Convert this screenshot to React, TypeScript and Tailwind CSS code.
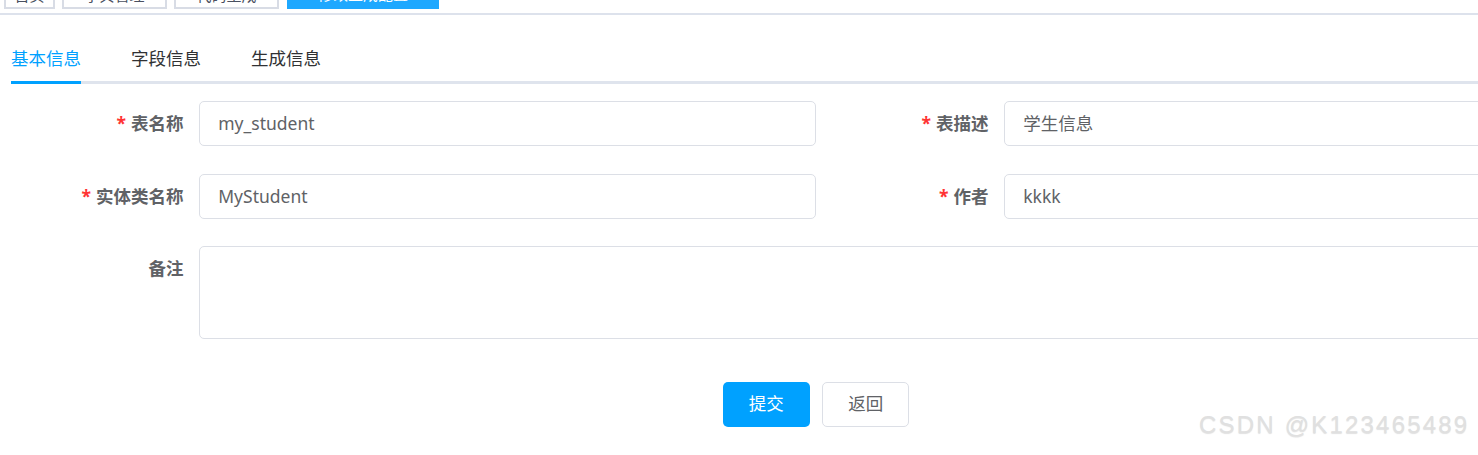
import React from 'react';

const tags = [
  { name: '首页', w: 'w-[51px]' },
  { name: '字典管理', w: 'w-[105px]' },
  { name: '代码生成', w: 'w-[105px]' },
];

const FormItem = ({ label, value, required = true }: { label: string; value: string; required?: boolean }) => (
  <div className="flex mb-[27.5px]">
    <label className="w-[187.5px] shrink-0 pr-[15px] text-right h-[45px] leading-[45px] font-bold text-[#606266]">
      {required && <span className="text-[#f33] mr-[5px]">*</span>}
      {label}
    </label>
    <div className="flex-1 h-[45px] border border-[#dcdfe6] rounded-[5px] px-[18.75px] leading-[43px] text-[#606266] bg-white">
      {value}
    </div>
  </div>
);

export default function App() {
  return (
    <div
      className="relative w-[1478px] h-[455px] overflow-hidden bg-white text-[17.5px]"
      style={{ fontFamily: '"Noto Sans", "Noto Sans CJK SC", sans-serif' }}
    >
      {/* 标签栏（被截掉上半部分） */}
      <div className="h-[15px] overflow-hidden border-b-2 border-[#dde2ec]">
        <div className="flex items-start gap-[7px] pl-[4px] -mt-[24px]">
          {tags.map((t) => (
            <div
              key={t.name}
              className={`${t.w} h-[33px] border-2 border-[#d8dce5] bg-white text-[15px] text-[#495060] flex items-start justify-center leading-none pt-[10px]`}
            >
              {t.name}
            </div>
          ))}
          <div className="w-[152px] h-[33px] ml-[1px] bg-[#1ea8ff] text-white text-[15px] flex items-start justify-center leading-none pt-[11px]">
            修改生成配置
          </div>
        </div>
      </div>

      <div className="pl-[11px] w-[1621.5px]">
        {/* 选项卡 */}
        <div className="mt-[19px] h-[50px] flex border-b-[3px] border-[#dfe4ed] leading-none">
          <div className="h-[50px] -mb-[3px] pr-[25px] flex">
            <span className="h-full flex items-center border-b-[3px] border-[#00a1ff] text-[#00a1ff] pt-[3px]">基本信息</span>
          </div>
          <div className="h-[50px] -mb-[3px] px-[25px] flex items-center text-[#303133]">字段信息</div>
          <div className="h-[50px] -mb-[3px] px-[25px] flex items-center text-[#303133]">生成信息</div>
        </div>

        {/* 表单 */}
        <div className="mt-[17px] w-[1610px]">
          <div className="grid grid-cols-2">
            <FormItem label="表名称" value="my_student" />
            <FormItem label="表描述" value="学生信息" />
            <FormItem label="实体类名称" value="MyStudent" />
            <FormItem label="作者" value="kkkk" />
          </div>
          <div className="flex">
            <label className="w-[187.5px] shrink-0 pr-[15px] text-right h-[45px] leading-[45px] font-bold text-[#606266]">
              备注
            </label>
            <div className="flex-1 h-[93px] border border-[#dcdfe6] rounded-[5px] bg-white" />
          </div>
          <div className="pt-[42.5px] flex justify-center gap-[12.5px]">
            <button className="w-[87px] h-[45px] rounded-[5px] bg-[#00a1ff] text-white leading-none">提交</button>
            <button className="w-[87px] h-[45px] rounded-[5px] border border-[#dcdfe6] bg-white text-[#606266] leading-none">返回</button>
          </div>
        </div>
      </div>

      {/* 水印 */}
      <div
        className="absolute left-[1199px] top-[413px] text-[24px] font-normal tracking-[2.2px] text-[#e0e0e0] [text-shadow:0_1px_1px_rgba(0,0,0,0.12)] leading-none"
        style={{ fontFamily: '"Liberation Sans", Arial, sans-serif' }}
      >
        CSDN @K123465489
      </div>
    </div>
  );
}
